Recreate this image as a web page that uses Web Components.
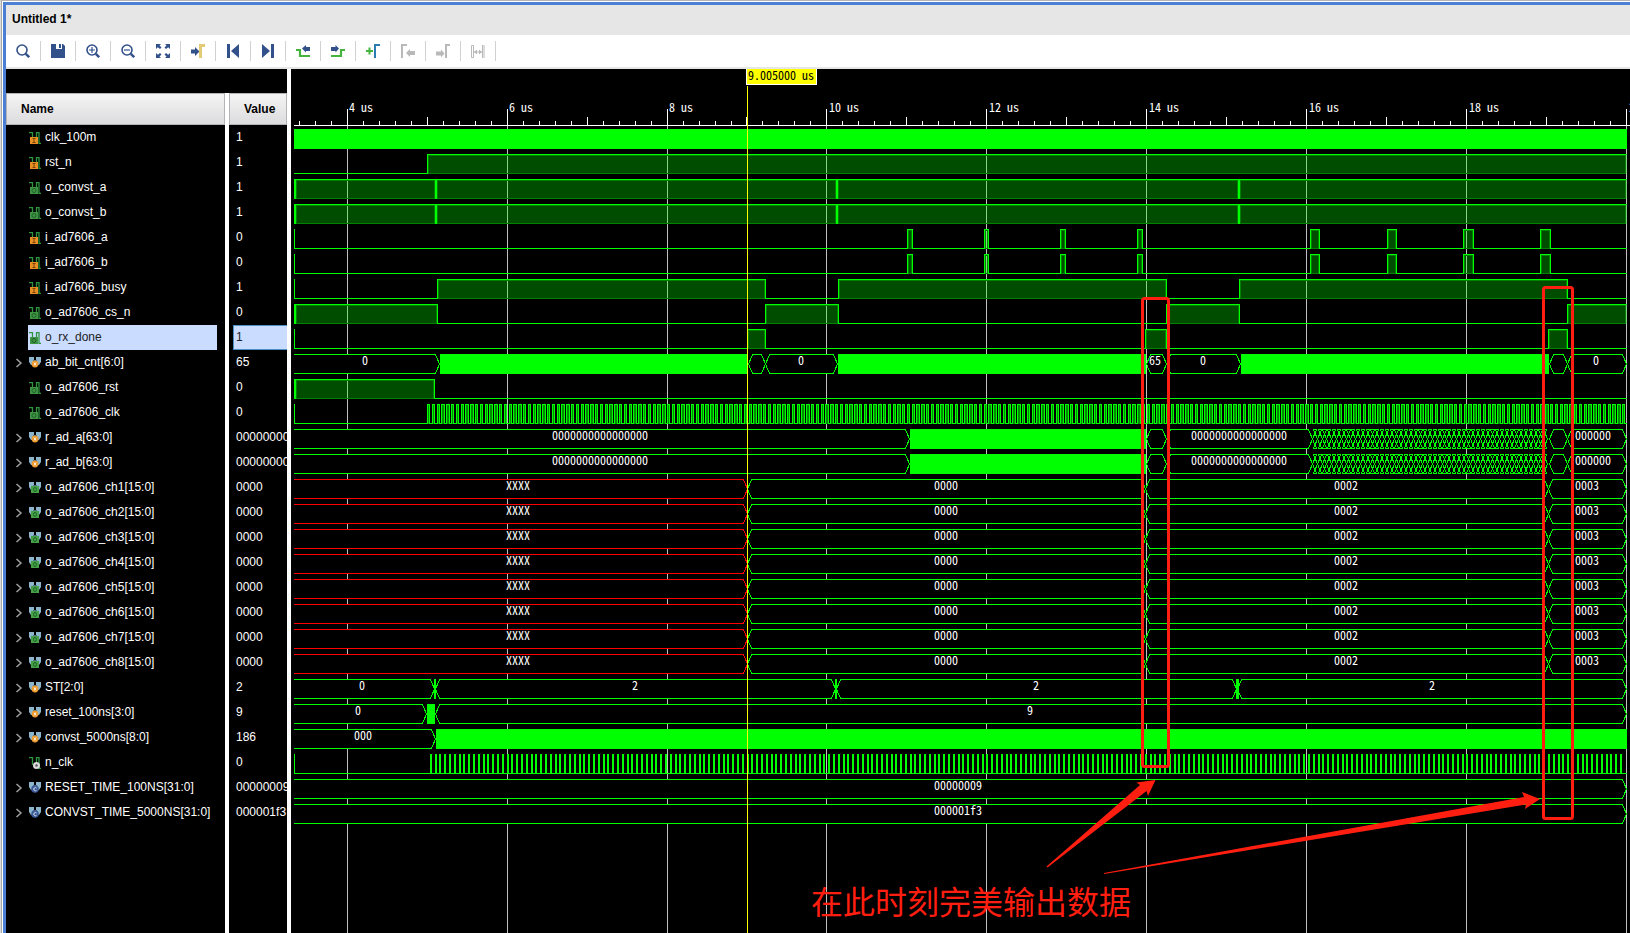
<!DOCTYPE html>
<html lang="en">
<head>
<meta charset="utf-8">
<meta name="viewport" content="width=device-width, initial-scale=1">
<title>Untitled 1*</title>
<style>
  html, body { margin: 0; min-height: 100%; background: #fff; }
  body { font: 12px/16px "Liberation Sans", Arial, sans-serif; color: #000; }
</style>
</head>
<body>
<sim-window>
  <span slot="heading">Untitled 1*</span>
  <sim-toolbar slot="toolbar"></sim-toolbar>
  <signal-table></signal-table>
  <wave-view></wave-view>
</sim-window>

<script>
const define = (name, cls) => customElements.define(name, cls);

/* ---------- signal data: times in window pixels, shifted by o to the start of a lane ---------- */
const END = 1336;
const X0 = 3;
const o = 291;
const rel = list => list.map(([a, b]) => [a - o, b - o]);
const pulses = rel([[907,913],[984,989],[1060,1066],[1137,1143],[1310,1320],[1387,1397],[1463,1474],[1540,1551]]);
const convst = { bars: rel([[294,296],[435,437],[836,838],[1238,1240]]), high: rel([[294,1627]]) };
const adBus = [
  { k: 'bus', a: 294, b: 910, t: '0000000000000000', c: 600 },
  { k: 'solid', a: 910, b: 1146 }, { k: 'bus', a: 1146, b: 1167 },
  { k: 'bus', a: 1166, b: 1313, t: '0000000000000000', c: 1239 },
  { k: 'dense', a: 1312, b: 1549 }, { k: 'bus', a: 1549, b: 1568 },
  { k: 'bus', a: 1567, b: 1627, t: '000000', c: 1593 }];
const chBus = [
  { k: 'bus', a: 294, b: 748, t: 'XXXX', c: 518, red: true },
  { k: 'bus', a: 747, b: 1146, t: '0000', c: 946 },
  { k: 'bus', a: 1145, b: 1549, t: '0002', c: 1346 },
  { k: 'bus', a: 1548, b: 1627, t: '0003', c: 1587 }];
const whole = (t) => [{ k: 'bus', a: 294, b: 1627, t, c: 958 }];

const SIGNALS = [
  { name: 'clk_100m', value: '1', icon: 'in', bus: [{ k: 'solid', a: 294, b: 1627 }] },
  { name: 'rst_n', value: '1', icon: 'in', high: rel([[427,1627]]) },
  { name: 'o_convst_a', value: '1', icon: 'out', ...convst },
  { name: 'o_convst_b', value: '1', icon: 'out', ...convst },
  { name: 'i_ad7606_a', value: '0', icon: 'in', edge: 1, high: pulses },
  { name: 'i_ad7606_b', value: '0', icon: 'in', edge: 1, high: pulses },
  { name: 'i_ad7606_busy', value: '1', icon: 'in', edge: 1, high: rel([[437,766],[838,1167],[1239,1568]]) },
  { name: 'o_ad7606_cs_n', value: '0', icon: 'out', bars: rel([[294,296]]), high: rel([[294,438],[765,839],[1166,1240],[1567,1627]]) },
  { name: 'o_rx_done', value: '1', icon: 'out', selected: true, edge: 1, high: rel([[747,766],[1145,1167],[1548,1568]]) },
  { name: 'ab_bit_cnt[6:0]', value: '65', icon: 'reg', bus: [
    { k: 'bus', a: 294, b: 440, t: '0', c: 365 }, { k: 'solid', a: 440, b: 747 },
    { k: 'bus', a: 748, b: 766 }, { k: 'bus', a: 765, b: 838, t: '0', c: 801 },
    { k: 'solid', a: 838, b: 1146 }, { k: 'bus', a: 1146, b: 1167, t: '65', c: 1155 },
    { k: 'bus', a: 1166, b: 1241, t: '0', c: 1203 }, { k: 'solid', a: 1241, b: 1549 },
    { k: 'bus', a: 1549, b: 1568 }, { k: 'bus', a: 1567, b: 1627, t: '0', c: 1596 }] },
  { name: 'o_ad7606_rst', value: '0', icon: 'out', bars: rel([[294,296]]), high: rel([[294,435]]) },
  { name: 'o_ad7606_clk', value: '0', icon: 'out', edge: 1, clock: 'wide' },
  { name: 'r_ad_a[63:0]', value: '0000000000000000', icon: 'reg', bus: adBus },
  { name: 'r_ad_b[63:0]', value: '0000000000000000', icon: 'reg', bus: adBus },
  ...[1,2,3,4,5,6,7,8].map(n => ({ name: `o_ad7606_ch${n}[15:0]`, value: '0000', icon: 'obus', bus: chBus })),
  { name: 'ST[2:0]', value: '2', icon: 'reg', bus: [
    { k: 'bus', a: 294, b: 435, t: '0', c: 362 }, { k: 'bus', a: 435, b: 836, t: '2', c: 635 },
    { k: 'bus', a: 836, b: 1237, t: '2', c: 1036 }, { k: 'bus', a: 1237, b: 1627, t: '2', c: 1432 },
    { k: 'solid', a: 434, b: 436 }, { k: 'solid', a: 835, b: 837 }, { k: 'solid', a: 1236, b: 1239 }] },
  { name: 'reset_100ns[3:0]', value: '9', icon: 'reg', bus: [
    { k: 'bus', a: 294, b: 427, t: '0', c: 358 }, { k: 'solid', a: 427, b: 435 }, { k: 'bus', a: 435, b: 1627, t: '9', c: 1030 }] },
  { name: 'convst_5000ns[8:0]', value: '186', icon: 'reg', bus: [
    { k: 'bus', a: 294, b: 436, t: '000', c: 363 }, { k: 'solid', a: 436, b: 1627 }] },
  { name: 'n_clk', value: '0', icon: 'net', edge: 1, clock: 'narrow' },
  { name: 'RESET_TIME_100NS[31:0]', value: '00000009', icon: 'const', bus: whole('00000009') },
  { name: 'CONVST_TIME_5000NS[31:0]', value: '000001f3', icon: 'const', bus: whole('000001f3') },
];

/* ---------- window frame ---------- */
define('sim-window', class extends HTMLElement {
  constructor() {
    super();
    this.attachShadow({ mode: 'open' }).innerHTML = `
      <style>
        :host { display: flex; flex-direction: column; min-height: 100vh; box-sizing: border-box;
          border-left: 1px solid #dcdcdc; border-top: 1px solid #b4b4b4; }
        .inner { flex: 1; display: flex; flex-direction: column; border-left: 1px solid #a8a8a8; padding: 1px 0 0 1px; background: #fff; }
        .frame { flex: 1; display: flex; flex-direction: column; border: solid #4a7fd4; border-width: 3px 0 0 3px; }
        h1 { margin: 0; padding: 6px 6px 8px; font: bold 12px/16px "Liberation Sans", Arial, sans-serif; background: #e6e6e6; }
        main { flex: 1; display: flex; border-top: 2px solid #e6e6e6; min-width: 0; }
        ::slotted(signal-table) { flex: none; }
        ::slotted(wave-view) { flex: 1; min-width: 0; }
      </style>
      <div class="inner"><div class="frame">
        <h1><slot name="heading"></slot></h1>
        <slot name="toolbar"></slot>
        <main><slot></slot></main>
      </div></div>`;
  }
});

/* ---------- toolbar ---------- */
const N = '#32508a', G = '#46b43c', D = '#b9b9b9';
const lens = `<circle cx="6" cy="6" r="5" fill="none" stroke="${N}" stroke-width="1.6"/><path d="M9.8 9.8 13.2 13.2" stroke="${N}" stroke-width="2.4"/>`;
const TOOLS = [
  ['Search', lens],
  ['Save', `<path d="M0 0H5V5H11V0H12L14 2V14H0Z M8 0H10V4H8Z" fill="${N}"/>`],
  ['Zoom in', lens + `<path d="M3 6H9M6 3V9" stroke="${N}" stroke-width="1.2"/>`],
  ['Zoom out', lens + `<path d="M3 6H9" stroke="${N}" stroke-width="1.2"/>`],
  ['Zoom fit', `<path d="M0 0H5L3.500 1.500 5.500 3.500 4 5 1.800 3.200 0 5ZM14 0V5L12.200 3.200 10 5 8.500 3.500 10.500 1.500 9 0ZM0 14V9L1.800 10.800 4 9 5.500 10.500 3.500 12.500 5 14ZM14 14H9L10.500 12.500 8.500 10.500 10 9 12.200 10.800 14 9Z" fill="${N}"/>`],
  ['Go to cursor', `<path d="M0 5.500H4V3L8.500 7.500 4 12V9.500H0Z" fill="${N}"/><path d="M9.500 14V1.500H14" fill="none" stroke="#e2cb74" stroke-width="3"/>`],
  ['Previous', `<path d="M1 0H4V14H1ZM13 0V14L5 7Z" fill="${N}"/>`],
  ['Next', `<path d="M10 0H13V14H10ZM1 0V14L9 7Z" fill="${N}"/>`],
  ['Previous transition', `<path d="M0 6H4V12H14" fill="none" stroke="${G}" stroke-width="2.200"/><path d="M6 4.500 10 1V3H14V7H10V8.500Z" fill="${N}"/>`],
  ['Next transition', `<path d="M0 12H10V6H14" fill="none" stroke="${G}" stroke-width="2.200"/><path d="M8 4.500 4.500 1V3H0V7H4.500V8.500Z" fill="${N}"/>`],
  ['Add marker', `<path d="M0 7H7M3.500 3.500V10.500" stroke="${G}" stroke-width="2"/><path d="M9 14V1H14" fill="none" stroke="#2c7cb4" stroke-width="2"/>`],
  ['Previous marker', `<path d="M1 14V1H6" fill="none" stroke="${D}" stroke-width="2"/><path d="M5 9 9 5V7H14V11H9V13Z" fill="${D}"/>`],
  ['Next marker', `<path d="M10 14V1H14" fill="none" stroke="${D}" stroke-width="2"/><path d="M8.500 9.500 5 5.500V7.500H0V11.500H5V13.500Z" fill="${D}"/>`],
  ['Swap cursors', `<path d="M.5 13.500V1.500H2.500V13.500ZM11.500 1V14M13 1V14M3 8H11" fill="none" stroke="${D}"/><path d="M3 8 6 5.500V10.500ZM11 8 8 5.500V10.500Z" fill="${D}"/>`],
];
define('tool-button', class extends HTMLElement {
  constructor() {
    super();
    this.attachShadow({ mode: 'open' }).innerHTML = `
      <style>
        :host { display: flex; align-items: center; }
        button { width: 34px; height: 32px; padding: 0; border: 0; background: none; display: grid; place-items: center; }
        :host::after { content: ""; width: 1px; height: 20px; background: #d2d2d2; }
        ::slotted(svg) { display: block; }
      </style>
      <button type="button"><slot></slot></button>`;
  }
  connectedCallback() {
    const b = this.shadowRoot.querySelector('button');
    b.setAttribute('aria-label', this.getAttribute('label'));
    b.title = this.getAttribute('label');
  }
});
define('sim-toolbar', class extends HTMLElement {
  constructor() {
    super();
    this.attachShadow({ mode: 'open' }).innerHTML = `
      <style>:host { display: flex; background: #fff; height: 32px; }</style>
      ${TOOLS.map(([l, s]) => `<tool-button label="${l}"><svg width="14" height="14" viewBox="0 0 14 14" fill-rule="evenodd">${s}</svg></tool-button>`).join('')}`;
  }
});

/* ---------- signal list ---------- */
const step = '<path d="M0 .5H3.500V8M7.500 7V.5H10V11.500H12" fill="none" stroke="#2f9440" stroke-width="1.300"/>';
const blocks = '<path d="M0 0H5V4L4 8H2L0 5ZM7 0H12V5L10 8H8L7 4Z" fill="#8db6cd"/><path d="M4 3H8V5H4Z" fill="#4a7088"/>';
const ICONS = {
  in: step + '<rect x="1" y="5" width="8" height="7" fill="#e98e22"/><path d="M3.500 6.500H6.500M5 6.500V10.500M3.500 10.500H6.500" stroke="#7a4306"/>',
  out: step + '<rect x="1" y="5" width="8" height="7" fill="#3f9444"/><circle cx="5" cy="8.500" r="2" fill="none" stroke="#1f5f28"/>',
  net: step + '<circle cx="7.500" cy="8.500" r="3.500" fill="#dcdcdc"/><circle cx="7.500" cy="8.500" r="1.200" fill="#555"/>',
  reg: blocks + '<circle cx="6" cy="7" r="3.400" fill="#f09a2c"/><path d="M5 5.500 7 8.500M7 5.500 5 8.500" stroke="#fff3dc"/>',
  obus: blocks + '<rect x="2" y="4" width="8" height="7" fill="#45a047"/><ellipse cx="6" cy="7.500" rx="1.500" ry="2" fill="none" stroke="#1c6426"/>',
  const: blocks + '<circle cx="6" cy="7" r="3.800" fill="#3c5a96"/><path d="M7.500 6A1.600 1.600 0 1 0 7.500 8.300" fill="none" stroke="#dfe8f8"/>',
};
define('signal-icon', class extends HTMLElement {
  connectedCallback() {
    if (this.shadowRoot) return;
    this.attachShadow({ mode: 'open' }).innerHTML = `
      <style>:host { display: block; width: 12px; height: 12px; } svg { display: block; }</style>
      <svg width="12" height="12" viewBox="0 0 12 12">${ICONS[this.getAttribute('kind')]}</svg>`;
  }
});
define('signal-table', class extends HTMLElement {
  constructor() {
    super();
    const row = s => `
      <tr class="${s.selected ? 'sel' : ''}">
        <td><div class="name">
          ${/\[/.test(s.name) ? `<button type="button" aria-label="Expand ${s.name}"><svg width="8" height="10" viewBox="0 0 8 10"><path d="M1.500 1 6 5 1.500 9" fill="none" stroke="#a0a0a0" stroke-width="1.500"/></svg></button>` : '<i></i>'}
          <span class="label"><signal-icon kind="${s.icon}"></signal-icon><span>${s.name}</span></span>
        </div></td>
        <td><div class="value">${s.value}</div></td>
      </tr>`;
    this.attachShadow({ mode: 'open' }).innerHTML = `
      <style>
        :host { display: block; width: 281px; border-right: 4px solid #fff; color: #fff;
          background: linear-gradient(to right, #000 219px, #fff 219px, #fff 223px, #000 223px); }
        .top { height: 24px; background: #000; }
        table { border-collapse: separate; border-spacing: 0; table-layout: fixed; width: 100%; }
        th, td { padding: 0; height: 25px; text-align: left; }
        th div { height: 32px; line-height: 30px; box-sizing: border-box; padding-left: 14px; border: 1px solid #b4b4b8;
          background: linear-gradient(#f4f4f4, #dcdcde); color: #000; font-weight: bold; }
        .c1 { width: 223px; }
        th:first-child div { margin-right: 4px; }
        .name { display: flex; align-items: center; height: 25px; }
        .name button, .name i { flex: none; width: 22px; height: 25px; padding: 0 0 0 9px; box-sizing: border-box; border: 0; background: none; }
        .name svg { display: block; }
        .label { display: flex; align-items: center; gap: 4px; width: 188px; height: 25px; padding-left: 1px; }
        .value { height: 25px; line-height: 24px; box-sizing: border-box; margin-left: 4px; padding-left: 3px; overflow: hidden; white-space: nowrap; }
        .label > span { line-height: 24px; height: 25px; }
        .sel .label { background: #cadcff; color: #222; }
        .sel .value { background: #cadcff; color: #222; border: 1px solid #4a90c8; border-right: 0; padding-left: 2px; line-height: 22px; }
      </style>
      <div class="top"></div>
      <table>
        <colgroup><col class="c1"><col></colgroup>
        <thead><tr><th scope="col"><div>Name</div></th><th scope="col"><div>Value</div></th></tr></thead>
        <tbody>${SIGNALS.map(row).join('')}</tbody>
      </table>`;
  }
});

/* ---------- waveforms ---------- */
const LIME = '#00ff00';
const TOP = 4, BOT = 24, MID = 14;
const rect = (x, y, w, h, f) => `<rect x="${x}" y="${y}" width="${w}" height="${h}" fill="${f}"/>`;

function drawHigh([a, b]) {
  const last = b >= END;
  const w = b - a;
  let s = rect(a, TOP, w, BOT - TOP, 'rgba(0,255,0,.3)');
  if (w > 3) s += `<rect x="${a + 1.5}" y="${TOP + 1.5}" width="${w - 3}" height="18" fill="none" stroke="#008200"/>`;
  s += rect(a, TOP, w, 1, LIME) + rect(a, TOP, 1, BOT - TOP, LIME);
  if (!last) s += rect(b - 1, TOP, 1, BOT - TOP, LIME);
  return s;
}
function drawLogic(s) {
  let out = '', x = X0;
  for (const [a, b] of s.high) {
    if (a > x) out += rect(x, BOT - 1, a - x, 1, LIME);
    out += drawHigh([a, b]);
    x = b;
  }
  if (x < END) out += rect(x, BOT - 1, END - x, 1, LIME);
  for (const [a, b] of s.bars || []) {
    const left = a > X0 ? a - 1 : a;
    out += rect(left, TOP + 1, b + 1 - left, BOT - TOP - 1, '#008200') + rect(a, TOP, b - a, BOT - TOP, LIME);
  }
  return out;
}
function drawClock(kind) {
  let out = rect(X0, BOT - 1, END - X0, 1, LIME);
  const start = kind === 'wide' ? 136.4 : 139.2;
  for (let x = start; x < END - 2; x += 4.8) {
    const a = Math.floor(x);
    if (kind === 'narrow') { out += rect(a, TOP, 2, BOT - TOP, LIME); continue; }
    const b = Math.floor(x + 2.4) + 1;
    out += rect(a, TOP, b - a, BOT - TOP, '#008c00') + rect(a, TOP, b - a, 1, LIME)
      + rect(a, TOP, 1, BOT - TOP, LIME) + rect(b - 1, TOP, 1, BOT - TOP, LIME);
  }
  return out;
}
function drawBus(list) {
  let out = '', labels = '';
  for (const g of list) {
    const a = g.a - o, b = g.b - o;
    if (g.k === 'solid') { out += rect(a, TOP, b - a, BOT - TOP, LIME); continue; }
    if (g.k === 'dense') {
      out += rect(a, TOP, b - a, BOT - TOP, '#000');
      let d = '';
      for (let x = a + .5; x < b - 4; x += 4.8) {
        const p = Math.floor(x) + .5, q = Math.floor(x + 4.8) + .5;
        d += `M${q} ${MID}L${q - 4} ${TOP + .5}H${p + 4}L${p} ${MID}L${p + 4} ${BOT - .5}H${q - 4}Z`;
      }
      out += `<path d="${d}" fill="none" stroke="${LIME}"/>`;
      continue;
    }
    const first = a <= X0;
    const l = first ? `M${a} ${TOP + .5}` : `M${a + .5} ${MID}L${a + 4.5} ${TOP + .5}`;
    const r = `H${b - 4.5}L${b - .5} ${MID}L${b - 4.5} ${BOT - .5}`;
    const e = first ? `H${a}` : `H${a + 4.5}L${a + .5} ${MID}`;
    out += `<path d="${l}${r}${e}" fill="#000" stroke="${g.red ? '#ff0000' : LIME}"/>`;
    if (g.t) labels += `<text x="${g.c - o}" y="15" text-anchor="middle">${g.t}</text>`;
  }
  return out + labels;
}

define('wave-lane', class extends HTMLElement {
  set signal(s) {
    const body = s.bus ? drawBus(s.bus) : s.clock ? drawClock(s.clock) : drawLogic(s);
    const edge = s.edge ? rect(X0, TOP, 1, BOT - TOP, LIME) : '';
    const root = this.shadowRoot || this.attachShadow({ mode: 'open' });
    root.innerHTML = `
      <style>
        :host { display: block; height: 25px; }
        svg { display: block; width: 100%; height: 25px; shape-rendering: crispEdges; }
        text { fill: #fff; }
      </style>
      <svg role="img" aria-label="${s.name}">${body}${edge}</svg>`;
  }
});

/* one grid step is 2 us; ticks divide it by ten */
const gridX = steps => Math.floor(56.3 + steps * 159.875);

define('time-ruler', class extends HTMLElement {
  constructor() {
    super();
    let ticks = '', labels = '';
    for (let i = -3; i <= 80; i++) {
      const x = gridX(i / 10);
      const h = i % 10 === 0 ? 16 : i % 5 === 0 ? 8 : 4;
      ticks += rect(x, 56 - h, 1, h, '#fff');
      if (i % 10 === 0) labels += `<text x="${x + (i < 30 ? 2 : 3)}" y="43">${4 + i / 5} us</text>`;
    }
    this.attachShadow({ mode: 'open' }).innerHTML = `
      <style>
        :host { display: block; height: 56px; }
        svg { display: block; width: 100%; height: 57px; shape-rendering: crispEdges; }
        text { fill: #fff; }
      </style>
      <svg>${ticks}<rect x="3" y="56" width="100%" height="1" fill="#fff"/>${labels}</svg>`;
  }
});

define('wave-view', class extends HTMLElement {
  constructor() {
    super();
    let grid = '';
    for (let i = 0; i <= 8; i++) grid += `<rect x="${gridX(i)}" y="57" width="1" height="100%" fill="#c0c0c0"/>`;
    this.attachShadow({ mode: 'open' }).innerHTML = `
      <style>
        :host { display: block; position: relative; overflow: hidden; background: #000;
          font: 12px/14px "Noto Sans Mono CJK SC", "Liberation Mono", monospace; }
        .grid, .notes { position: absolute; left: 0; top: 0; width: 100%; height: 100%; shape-rendering: crispEdges; }
        .lanes { position: relative; }
        .cursor { position: absolute; left: 456px; top: 17px; bottom: 0; width: 1px; background: #ff0; }
        .time { position: absolute; left: 455px; top: 0; height: 15px; line-height: 12px; padding: 0 1px; width: 67px;
          background: #ff0; color: #000; border: 1px solid #fff; border-top: 0; white-space: nowrap; }
        .notes { shape-rendering: auto; }
        .caption { position: absolute; left: 520px; top: 807px; margin: 0; color: #ff1e10; white-space: nowrap;
          font: 400 32px/48px "Noto Sans CJK SC", sans-serif; }
      </style>
      <svg class="grid" aria-hidden="true">${grid}</svg>
      <div class="lanes"><time-ruler></time-ruler></div>
      <div class="cursor"></div>
      <div class="time">9.005000 us</div>
      <svg class="notes" aria-hidden="true">
        <g fill="none" stroke="#ff1e10" stroke-width="3">
          <rect x="851.500" y="229.500" width="26" height="468" rx="2"/>
          <rect x="1252.500" y="218.500" width="29" height="531" rx="2"/>
        </g>
        <g fill="#ff1e10">
          <path d="M755.500 797.500 849 716 845.500 713.500 864.500 711 857 727 855.500 722 756.500 798.500Z"/>
          <path d="M813 804 1233 728 1231 723 1249 730 1234 740 1235 735.500 813 805Z"/>
        </g>
      </svg>
      <p class="caption" lang="zh-CN">在此时刻完美输出数据</p>`;
    const lanes = this.shadowRoot.querySelector('.lanes');
    for (const s of SIGNALS) {
      const lane = document.createElement('wave-lane');
      lane.signal = s;
      lanes.append(lane);
    }
  }
});
</script>
</body>
</html>
